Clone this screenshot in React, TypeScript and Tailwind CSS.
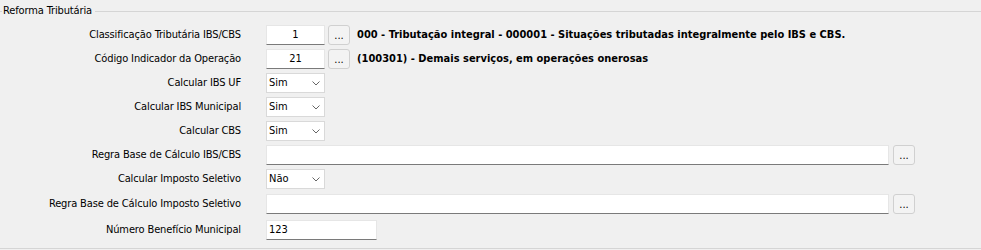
import React from 'react';

type EditProps = { value?: string; className?: string; center?: boolean };

const Edit: React.FC<EditProps> = ({ value = '', className = '', center = false }) => (
  <div
    className={`h-5 bg-white border border-[#e6e6e6] border-b-[#7a7a7a] flex items-center px-[2px] ${
      center ? 'justify-center' : ''
    } ${className}`}
  >
    {value}
  </div>
);

const DotsButton: React.FC = () => (
  <button className="h-5 w-[22px] rounded-[3px] border border-[#d0d0d0] bg-[#f3f3f3] flex items-center justify-center text-[#000] leading-none">
    ...
  </button>
);

const Combo: React.FC<{ value: string }> = ({ value }) => (
  <div className="h-5 w-[59px] bg-white border border-[#d9d9d9] flex items-center justify-between pl-[2px] pr-[4px]">
    <span>{value}</span>
    <svg width="8" height="5" viewBox="0 0 8 5" className="text-[#666]">
      <polyline points="0.5,0.5 4,4 7.5,0.5" fill="none" stroke="currentColor" strokeWidth="1" />
    </svg>
  </div>
);

const Row: React.FC<{ label: string; children: React.ReactNode; className?: string }> = ({
  label,
  children,
  className = '',
}) => (
  <div className={`flex items-center h-5 ${className}`}>
    <div className="w-[241px] text-right whitespace-nowrap tracking-[-0.13px]">{label}</div>
    <div className="ml-[25px] flex items-center">{children}</div>
  </div>
);

export default function App() {
  return (
    <div className="w-[981px] h-[250px] bg-[#f0f0f0] text-black text-[11px] [font-family:'DejaVu_Sans_Condensed','Liberation_Sans',sans-serif] overflow-hidden">
      {/* Group title */}
      <div className="flex items-center h-[22px]">
        <div className="w-[2px] h-px bg-[#d5d5d5]" />
        <span className="pl-px pr-[3px] tracking-[-0.13px]">Reforma Tributária</span>
        <div className="flex-1 h-px bg-[#d5d5d5]" />
      </div>

      <div className="pt-[3px] flex flex-col gap-1">
        <Row label="Classificação Tributária IBS/CBS">
          <Edit value="1" center className="w-[59px]" />
          <div className="ml-[3px]">
            <DotsButton />
          </div>
          <span className="ml-[7px] font-bold whitespace-nowrap">
            000 - Tributação integral - 000001 - Situações tributadas integralmente pelo IBS e CBS.
          </span>
        </Row>
        <Row label="Código Indicador da Operação">
          <Edit value="21" center className="w-[59px]" />
          <div className="ml-[3px]">
            <DotsButton />
          </div>
          <span className="ml-[7px] font-bold whitespace-nowrap">
            (100301) - Demais serviços, em operações onerosas
          </span>
        </Row>
        <Row label="Calcular IBS UF">
          <Combo value="Sim" />
        </Row>
        <Row label="Calcular IBS Municipal">
          <Combo value="Sim" />
        </Row>
        <Row label="Calcular CBS">
          <Combo value="Sim" />
        </Row>
        <Row label="Regra Base de Cálculo IBS/CBS">
          <Edit className="w-[623px]" />
          <div className="ml-[4px]">
            <DotsButton />
          </div>
        </Row>
        <Row label="Calcular Imposto Seletivo">
          <Combo value="Não" />
        </Row>
        <Row label="Regra Base de Cálculo Imposto Seletivo" className="mt-px">
          <Edit className="w-[623px]" />
          <div className="ml-[4px]">
            <DotsButton />
          </div>
        </Row>
        <Row label="Número Benefício Municipal" className="mt-[2px]">
          <Edit value="123" className="w-[111px]" />
        </Row>
      </div>

      <div className="mt-2 h-px bg-[#d5d5d5]" />
    </div>
  );
}
